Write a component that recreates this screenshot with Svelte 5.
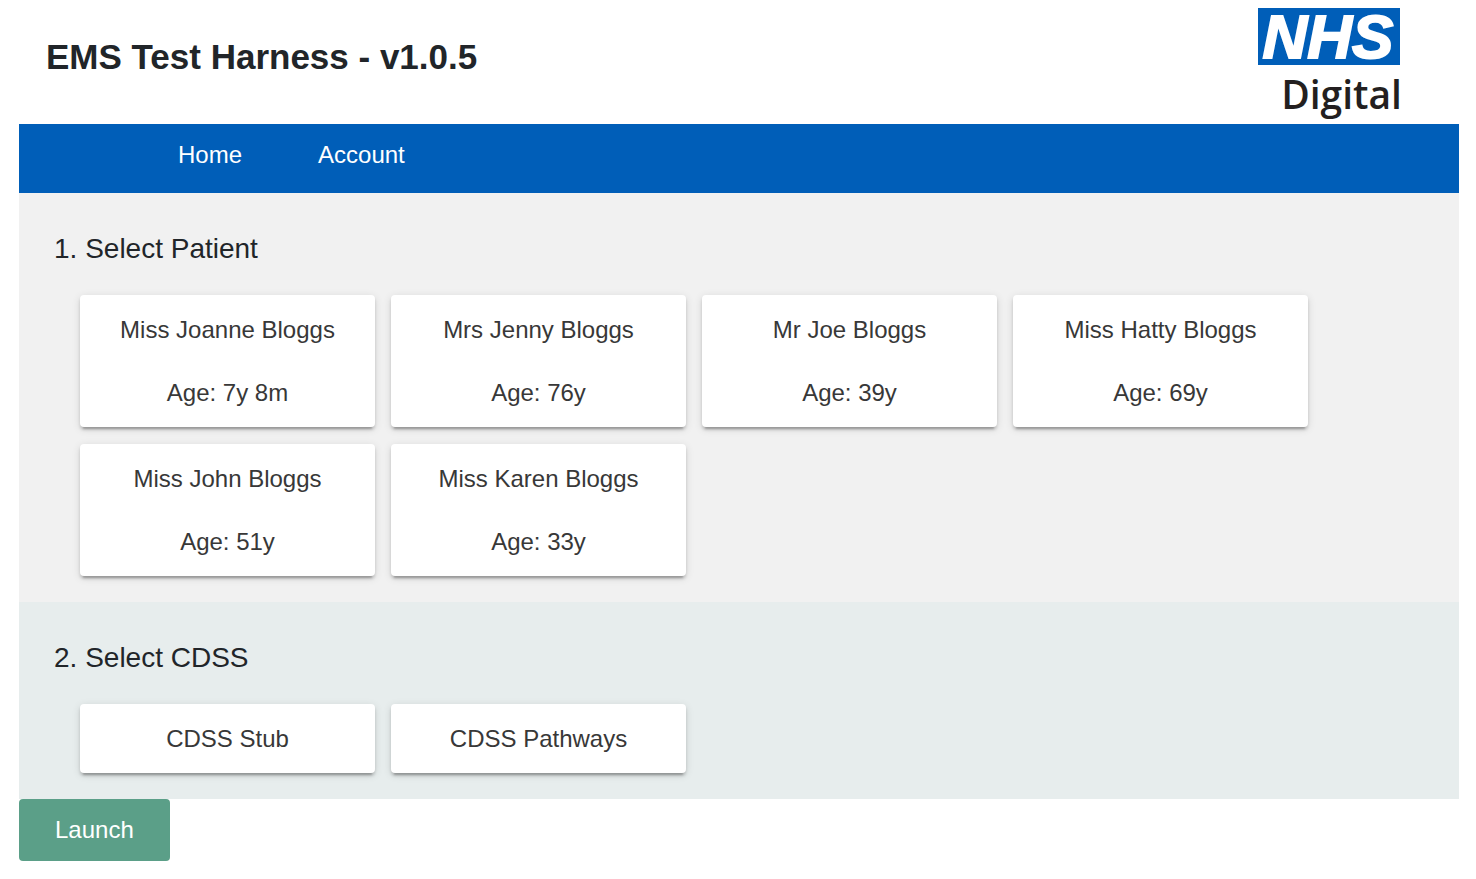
<script>
  const patients = [
    { name: 'Miss Joanne Bloggs', age: '7y 8m' },
    { name: 'Mrs Jenny Bloggs', age: '76y' },
    { name: 'Mr Joe Bloggs', age: '39y' },
    { name: 'Miss Hatty Bloggs', age: '69y' },
    { name: 'Miss John Bloggs', age: '51y' },
    { name: 'Miss Karen Bloggs', age: '33y' },
  ];
  const systems = ['CDSS Stub', 'CDSS Pathways'];
</script>

<div class="page">
  <header>
    <h1>EMS Test Harness - v1.0.5</h1>
    <svg class="logo" viewBox="0 0 144 112" role="img" aria-label="NHS Digital">
      <rect x="1" y="1" width="142" height="57" fill="#005eb8" />
      <text class="nhs" x="71" y="51" text-anchor="middle">NHS</text>
      <text class="digital" x="145" y="102" text-anchor="end">Digital</text>
    </svg>
  </header>

  <nav>
    <a href="#home">Home</a>
    <a href="#account">Account</a>
  </nav>

  <main>
    <section class="patients">
      <h2>1. Select Patient</h2>
      <div class="cards">
        {#each patients as patient}
          <button class="card" type="button">
            <span>{patient.name}</span>
            <span>Age: {patient.age}</span>
          </button>
        {/each}
      </div>
    </section>
    <section class="systems">
      <h2>2. Select CDSS</h2>
      <div class="cards">
        {#each systems as system}
          <button class="card" type="button"><span>{system}</span></button>
        {/each}
      </div>
    </section>
  </main>

  <button class="launch" type="button">Launch</button>
</div>

<style>
  :global(body) {
    margin: 0;
    background: #fff;
  }
  .page {
    padding: 0 17px 0 19px;
    color: #212529;
    font-family: "Liberation Sans", Arial, sans-serif;
    font-size: 24px;
  }
  header {
    display: flex;
    justify-content: space-between;
    padding: 7px 58px 5px 27px;
  }
  h1 {
    margin: 28px 0 0;
    font-size: 35px;
    line-height: 44px;
  }
  .logo {
    width: 144px;
    height: 112px;
    overflow: visible;
  }
  .nhs {
    fill: #fff;
    stroke: #fff;
    stroke-width: 2px;
    font: italic 700 62px "Liberation Sans", Arial, sans-serif;
  }
  .digital {
    fill: #231f20;
    font: 600 39px "Open Sans", sans-serif;
  }
  nav {
    display: flex;
    gap: 76px;
    padding: 12px 159px 19px;
    background: #005eb8;
    line-height: 38px;
  }
  nav a {
    color: #fff;
    text-decoration: none;
  }
  section {
    padding: 37px 35px 26px;
  }
  .patients {
    background: #f1f1f1;
  }
  .systems {
    background: #e7eded;
  }
  h2 {
    margin: 0 0 27px;
    font-size: 28px;
    font-weight: 400;
    line-height: 38px;
  }
  .cards {
    display: grid;
    grid-template-columns: repeat(auto-fill, 295px);
    gap: 17px 16px;
    padding: 0 100px 0 26px;
  }
  .card {
    display: flex;
    flex-direction: column;
    gap: 26px;
    align-items: center;
    padding: 16px;
    border: 0;
    border-radius: 4px;
    background: #fff;
    box-shadow:
      0 5px 2px -3px rgba(0, 0, 0, 0.2),
      0 3px 3px rgba(0, 0, 0, 0.14),
      0 2px 8px rgba(0, 0, 0, 0.12);
    color: #383838;
    font: inherit;
    line-height: 37px;
  }
  .launch {
    padding: 12px 36px;
    border: 0;
    border-radius: 4px;
    background: #5b9f88;
    color: #fff;
    font: inherit;
    line-height: 38px;
  }
</style>
